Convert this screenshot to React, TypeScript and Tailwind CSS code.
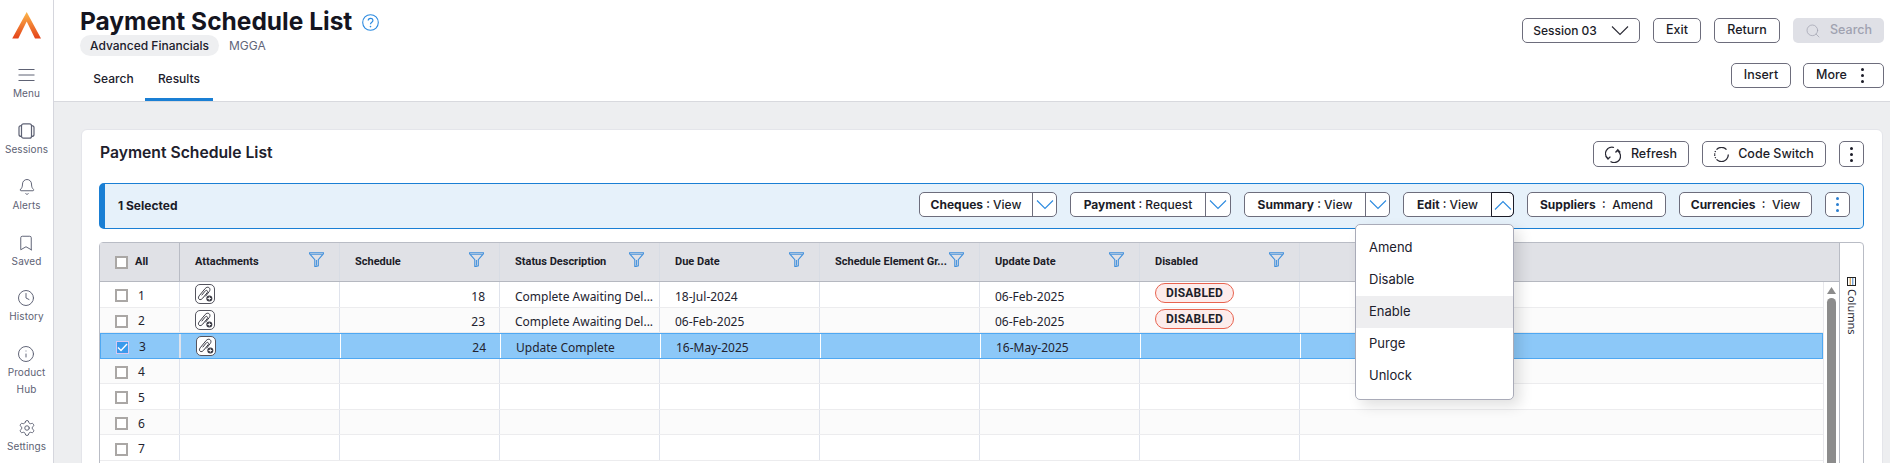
import React from "react";
import { Bell, Bookmark, Clock, Info, Settings, Search } from "lucide-react";

const ui = "font-['Inter','Liberation_Sans',sans-serif]";
const grid = "font-['Noto_Sans','Open_Sans',sans-serif]";

const Chevron = ({ up = false, className = "" }: { up?: boolean; className?: string }) => (
  <svg width="18" height="10" viewBox="0 0 18 10" fill="none" className={className}>
    <path d={up ? "M1 9.5 9 1.5l8 8" : "M1 .5l8 8 8-8"} stroke="currentColor" strokeWidth="1.1" />
  </svg>
);

const Dots = ({ className = "" }: { className?: string }) => (
  <span className={`flex flex-col gap-[3px] ${className}`}>
    <i className="w-[3px] h-[3px] rounded-full bg-current" />
    <i className="w-[3px] h-[3px] rounded-full bg-current" />
    <i className="w-[3px] h-[3px] rounded-full bg-current" />
  </span>
);

const Btn = ({ w, children, className = "" }: { w: string; children: React.ReactNode; className?: string }) => (
  <div className={`${w} h-[25px] shrink-0 flex items-center justify-center rounded-[5px] border border-[#6d6d7c] bg-white text-[12.5px] font-medium text-[#1c1c28] ${className}`}>
    {children}
  </div>
);

const Split = ({ a, b, wl, wr, active = false }: { a: string; b: string; wl: string; wr: string; active?: boolean }) => (
  <div className="flex h-[25px] shrink-0 rounded-[5px] border border-[#6d6d7c] bg-white text-[12px] text-[#1c1c28]">
    <div className={`${wl} flex items-center justify-center whitespace-pre`}>
      <b className="font-bold">{a}</b>
      <span className="font-medium"> : {b}</span>
    </div>
    <div className={`${wr} flex items-center justify-center border-l text-[#2b8ae0] ${active ? "border-[#1c1c28] rounded-r-[5px] border -my-px -mr-px" : "border-[#6d6d7c]"}`}>
      <Chevron up={active} />
    </div>
  </div>
);

const Pair = ({ a, b, w }: { a: string; b: string; w: string }) => (
  <div className={`${w} h-[25px] shrink-0 flex items-center justify-center whitespace-pre rounded-[5px] border border-[#6d6d7c] bg-white text-[12px] text-[#1c1c28]`}>
    <b className="font-bold">{a}</b>
    <span className="font-medium">  :  {b}</span>
  </div>
);

const Funnel = () => (
  <svg width="15" height="15" viewBox="0 0 15 15" fill="none" className="shrink-0 text-[#3f8fdc]">
    <path d="M.6.8h13.8v1L9.3 7.6v6.2L7 14.4H5.8V7.6L.6 1.8z" stroke="currentColor" strokeWidth="1.1" />
    <path d="M1.4 2.3h12.2M7.5 8v5.5" stroke="currentColor" strokeWidth=".9" />
  </svg>
);

const Clip = () => (
  <span className="w-[20px] h-[20px] flex items-center justify-center rounded-[5px] border border-[#55555f] bg-white">
    <svg width="18" height="18" viewBox="0 0 18 18" fill="none" stroke="#3a3a44" strokeWidth="1">
      <path d="M3.200 10.800 9.200 3.500c1.200-1.500 3-1.600 4-.7s1 2.500 0 3.800l-3.700 4.700M3.200 10.800c-1.100 1.500-1 2.800 0 3.500s2.400.2 3.500-1.100l4.300-5.300c.7-.9.700-1.800.1-2.300s-1.500-.2-2.100.6L5.700 10.300" />
      <circle cx="13.300" cy="13.500" r="3" fill="#3a3a44" stroke="none" />
      <path d="M11.500 13.500h3.600M13.300 11.700v3.600" stroke="#fff" strokeWidth=".9" />
    </svg>
  </span>
);

const Check = ({ on = false }: { on?: boolean }) =>
  on ? (
    <span className="w-[13px] h-[13px] shrink-0 flex items-center justify-center bg-[#3b9aec] border border-[#d8c8f0]">
      <svg width="11" height="9" viewBox="0 0 11 9" fill="none"><path d="M1 4.500l3 3 6-6.500" stroke="#fff" strokeWidth="1.400" /></svg>
    </span>
  ) : (
    <span className="w-[13px] h-[13px] shrink-0 bg-white border-2 border-[#aaa7a5]" />
  );

const Nav = ({ icon, label, className = "" }: { icon: React.ReactNode; label: React.ReactNode; className?: string }) => (
  <div className={`flex flex-col items-center text-[#5e6274] ${className}`}>
    <span className="h-[20px] flex items-center justify-center">{icon}</span>
    <span className="text-[10px] leading-[17px] text-center tracking-[0.1px]">{label}</span>
  </div>
);

const cols = [
  "Attachments",
  "Schedule",
  "Status Description",
  "Due Date",
  "Schedule Element Gr...",
  "Update Date",
  "Disabled",
];

const rows = [
  { n: 1, s: "18", st: "Complete Awaiting Del...", d: "18-Jul-2024", u: "06-Feb-2025", dis: true },
  { n: 2, s: "23", st: "Complete Awaiting Del...", d: "06-Feb-2025", u: "06-Feb-2025", dis: true },
  { n: 3, s: "24", st: "Update Complete", d: "16-May-2025", u: "16-May-2025", sel: true },
  { n: 4 }, { n: 5 }, { n: 6 }, { n: 7 },
] as { n: number; s?: string; st?: string; d?: string; u?: string; dis?: boolean; sel?: boolean }[];

const Cell = ({ w, sel, children, className = "" }: { w: string; sel?: boolean; children?: React.ReactNode; className?: string }) => (
  <div className={`${w} shrink-0 h-full flex items-center border-r ${sel ? "border-white" : "border-[#dfe3ec]"} ${className}`}>{children}</div>
);

const Row = ({ r, i }: { r: (typeof rows)[number]; i: number }) => (
  <div className={`h-[25.55px] flex items-center text-[12px] text-[#23232f] border-b ${r.sel ? "bg-[#8cc8f8] border border-[#4fa8f2]" : i % 2 ? "bg-[#fbfbfb] border-[#ececee]" : "bg-white border-[#ececee]"}`}>
    <Cell w="w-[80px]" className={`pl-[15px] gap-[10px] pt-[3px] ${r.sel ? "border-r-2 border-[#3f9af0]" : "border-[#c5c8d0]"}`}>
      <Check on={r.sel} />
      <span>{r.n}</span>
    </Cell>
    <Cell w="w-[160px]" sel={r.sel} className="pl-[15px] items-start pt-[2px]">{r.s && <Clip />}</Cell>
    <Cell w="w-[160px]" sel={r.sel} className="justify-end pr-[14px] pt-[5px]">{r.s}</Cell>
    <Cell w="w-[160px]" sel={r.sel} className="pl-[15px] pt-[5px]"><span className="whitespace-nowrap">{r.st}</span></Cell>
    <Cell w="w-[160px]" sel={r.sel} className="pl-[15px] pt-[5px]">{r.d}</Cell>
    <Cell w="w-[160px]" sel={r.sel} />
    <Cell w="w-[160px]" sel={r.sel} className="pl-[15px] pt-[5px]">{r.u}</Cell>
    <Cell w="w-[160px]" sel={r.sel} className="pl-[15px] items-start pt-[1px]">
      {r.dis && (
        <span className="font-['Roboto',sans-serif] w-[79px] h-[20px] flex items-center justify-center rounded-full border border-[#e8634f] bg-[#fdeceb] text-[12px] font-bold tracking-[0.2px] text-[#1f1f2a]">DISABLED</span>
      )}
    </Cell>
  </div>
);

export default function App() {
  return (
    <div className={`${ui} flex h-screen overflow-hidden bg-white`}>
      <aside className="w-[54px] shrink-0 flex flex-col items-center border-r border-[#d5d6dd] bg-white">
        <svg width="30" height="27" viewBox="0 0 30 27" className="mt-[12px] shrink-0">
          <defs>
            <linearGradient id="lg" x1="0" y1="0" x2="0" y2="1">
              <stop offset="0" stopColor="#fcb64a" />
              <stop offset="1" stopColor="#e4431a" />
            </linearGradient>
          </defs>
          <path d="M14.700 0 29 26.400H23L14.700 9.500 6.300 26.400H.2z" fill="url(#lg)" />
        </svg>
        <Nav className="mt-[26px]" label="Menu" icon={
          <svg width="17" height="14" viewBox="0 0 17 14" stroke="currentColor" strokeWidth="1"><path d="M.5 1.500h16M.5 7h16M.5 12.500h16" /></svg>
        } />
        <Nav className="mt-[19px]" label="Sessions" icon={
          <svg width="17" height="16" viewBox="0 0 17 16" fill="none" stroke="currentColor" strokeWidth="1.200"><rect x="3.500" y=".8" width="10" height="14.400" rx="2" /><path d="M3.500 2.600C1.700 2.600 1 3.400 1 4.600v6.800c0 1.200.7 2 2.500 2M13.500 2.600c1.800 0 2.500.8 2.500 2v6.800c0 1.200-.7 2-2.500 2" /></svg>
        } />
        <Nav className="mt-[19px]" label="Alerts" icon={<Bell size={18} strokeWidth={1.3} />} />
        <Nav className="mt-[19px]" label="Saved" icon={<Bookmark size={18} strokeWidth={1.3} />} />
        <Nav className="mt-[18px]" label="History" icon={<Clock size={18} strokeWidth={1.3} />} />
        <Nav className="mt-[19px]" label={<>Product<br />Hub</>} icon={<Info size={18} strokeWidth={1.3} />} />
        <Nav className="mt-[20px]" label="Settings" icon={<Settings size={18} strokeWidth={1.3} />} />
      </aside>

      <main className="flex-1 min-w-0 flex flex-col">
        <header className="h-[102px] shrink-0 flex justify-between border-b border-[#d8d9de] pl-[26px] pr-[6px] bg-white">
          <div className="flex flex-col">
            <div className="h-[35px] flex items-center gap-[10px] pt-[7px]">
              <h1 className="text-[24.500px] font-bold text-[#15151f] leading-none">Payment Schedule List</h1>
              <svg width="17" height="17" viewBox="0 0 17 17" fill="none" className="mt-[3px] text-[#2b8ae0]" stroke="currentColor"><circle cx="8.500" cy="8.500" r="7.800" strokeWidth="1.100" /><path d="M6.200 6.600c0-3 4.700-3 4.700-.2 0 1.900-2.400 1.800-2.400 3.900" strokeWidth="1.200" /><circle cx="8.500" cy="12.600" r=".8" fill="currentColor" stroke="none" /></svg>
            </div>
            <div className="flex items-center h-[21px] text-[12px] font-medium">
              <span className="h-full flex items-center rounded-full bg-[#eeeff1] px-[10px] text-[#20202c]">Advanced Financials</span>
              <span className="ml-[10px] font-normal text-[#62667a]">MGGA</span>
            </div>
            <nav className="mt-[9px] flex text-[12px] font-medium text-[#20202c]">
              <span className="h-[36px] w-[65px] flex items-center justify-center pb-[8px] pl-[2px]">Search</span>
              <span className="h-[36px] w-[68px] flex items-center justify-center pb-[5px] border-b-[3px] border-[#1a7fd4]">Results</span>
            </nav>
          </div>
          <div className="flex flex-col items-end pt-[18px] gap-[20px]">
            <div className="flex gap-[13px]">
              <Btn w="w-[118px]" className="gap-[14px] !text-[12px]">Session 03 <Chevron className="text-[#2a2a35]" /></Btn>
              <Btn w="w-[48px]">Exit</Btn>
              <Btn w="w-[66px]">Return</Btn>
              <div className="w-[91px] h-[25px] flex items-center justify-center gap-[9px] rounded-[5px] bg-[#dfe0e6] text-[12.500px] font-medium text-[#a0a2b0]">
                <Search size={16} strokeWidth={1.100} />Search
              </div>
            </div>
            <div className="flex gap-[12px]">
              <Btn w="w-[60px]">Insert</Btn>
              <Btn w="w-[81px]" className="gap-[14px] pr-[7px]">More <Dots /></Btn>
            </div>
          </div>
        </header>

        <div className="flex-1 min-h-0 bg-[#edeef0] pl-[27px] pr-[7px] pt-[27px]">
          <section className="rounded-t-[6px] border border-[#e4e5ea] bg-white pl-[17px] pr-[18px] pt-[11px] h-[500px]">
            <div className="flex items-center h-[26px]">
              <h2 className="ml-[1px] -mt-[2px] text-[15.700px] font-semibold text-[#20202c]">Payment Schedule List</h2>
              <div className="ml-auto flex gap-[13px]">
                <Btn w="w-[96px] !h-[26px]" className="gap-[10px]">
                  <svg width="16" height="17" viewBox="0 0 16 17" fill="none" stroke="#2a2a35" strokeWidth="1.300"><path d="M9 1.500A6.400 6.400 0 0 0 3 12.600M5.500 15.500a6.400 6.400 0 0 0 7.200-10.600M.6 10.200 3 13l2.400-2.400M10.500 6.500 12.800 3.800l2.500 2.700" /></svg>
                  Refresh
                </Btn>
                <Btn w="w-[124px] !h-[26px]" className="gap-[9px]">
                  <svg width="15" height="15" viewBox="0 0 15 15" fill="none" stroke="#2a2a35" strokeWidth="1.300"><path d="M2.500 2.600A6.800 6.800 0 0 1 12.500 2.600M14.300 7.500a6.800 6.800 0 0 1-1.800 4.900M12.500 12.400a6.800 6.800 0 0 1-10 0" /><path d="M.7 7.500a6.800 6.800 0 0 1 1-3.700M1.700 11.200a6.800 6.800 0 0 1-1-3.700" strokeDasharray="1.200 1.200" /></svg>
                  Code Switch
                </Btn>
                <Btn w="w-[25px] !h-[26px]"><Dots /></Btn>
              </div>
            </div>

            <div className="mt-[16px] h-[46px] flex items-center rounded-[5px] border border-[#1a7fd4] border-l-[6px] bg-[#e6f1fa] pl-[13px] pr-[13px] pb-[3px]">
              <span className="mt-[3px] text-[12px] font-bold text-[#1c1c28]">1 Selected</span>
              <div className="ml-auto flex items-center gap-[13px]">
                <Split a="Cheques" b="View" wl="w-[112px]" wr="w-[24px]" />
                <Split a="Payment" b="Request" wl="w-[134px]" wr="w-[25px]" />
                <Split a="Summary" b="View" wl="w-[120px]" wr="w-[24px]" />
                <div className="relative">
                  <Split a="Edit" b="View" wl="w-[87px]" wr="w-[23px]" active />
                  <ul className="absolute z-10 top-[32px] right-0 w-[159px] py-[7px] rounded-[5px] border border-[#a9abb8] bg-white text-[13px] text-[#20202c] shadow-[6px_6px_14px_rgba(0,0,0,0.12)]">
                    {["Amend", "Disable", "Enable", "Purge", "Unlock"].map((t) => (
                      <li key={t} className={`h-[32px] flex items-center pl-[13px] ${t === "Enable" ? "bg-[#eeeef0]" : ""}`}>{t}</li>
                    ))}
                  </ul>
                </div>
                <Pair a="Suppliers" b="Amend" w="w-[139px]" />
                <Pair a="Currencies" b="View" w="w-[133px]" />
                <Btn w="w-[25px]"><Dots className="text-[#2b7fd0]" /></Btn>
              </div>
            </div>

            <div className={`${grid} mt-[13px] flex h-[300px] rounded-t-[4px] border border-[#b9bcc5]`}>
              <div className="flex-1 min-w-0 flex flex-col">
                <div className="h-[39px] shrink-0 flex items-center bg-[#e0e1e6] border-b border-[#b5b8c0] font-['Roboto',sans-serif] text-[11px] font-bold text-[#1c1c28]">
                  <div className="w-[80px] h-full shrink-0 flex items-center pl-[15px] gap-[7px] border-r border-[#b9bcc5]">
                    <Check /> <span>All</span>
                  </div>
                  {cols.map((c) => (
                    <div key={c} className="w-[160px] h-full shrink-0 flex items-center justify-between pl-[15px] pr-[15px] border-r border-[#d8dce4]">
                      <span className="whitespace-nowrap">{c}</span>
                      <span className="mb-[5px]"><Funnel /></span>
                    </div>
                  ))}
                </div>
                <div className="flex-1 min-h-0 flex">
                  <div className="flex-1 min-w-0 border-r border-[#e8e8ec]">
                    {rows.map((r, i) => <Row key={r.n} r={r} i={i} />)}
                  </div>
                  <div className="w-[15px] shrink-0 flex flex-col items-center bg-white pt-[5px]">
                    <svg width="9" height="7" viewBox="0 0 9 7" className="shrink-0"><path d="M4.500 0 9 7H0z" fill="#8c8c8c" /></svg>
                    <div className="mt-[4px] w-[9px] flex-1 rounded-t-full bg-[#8c8c8c]" />
                  </div>
                </div>
              </div>
              <div className="w-[24px] shrink-0 flex flex-col items-center border-l border-[#b9bcc5] pt-[34px]">
                <svg width="9" height="9" viewBox="0 0 9 9" fill="none" className="shrink-0">
                  <rect x=".5" y=".5" width="8" height="8" stroke="#222" />
                  <path d="M3.200 1v7" stroke="#c98a2b" />
                  <path d="M5.800 1v7" stroke="#3f7fc4" />
                </svg>
                <span className="mt-[3px] text-[11px] leading-[12px] text-[#2a2a35] [writing-mode:vertical-rl]">Columns</span>
              </div>
            </div>
          </section>
        </div>
      </main>
    </div>
  );
}
